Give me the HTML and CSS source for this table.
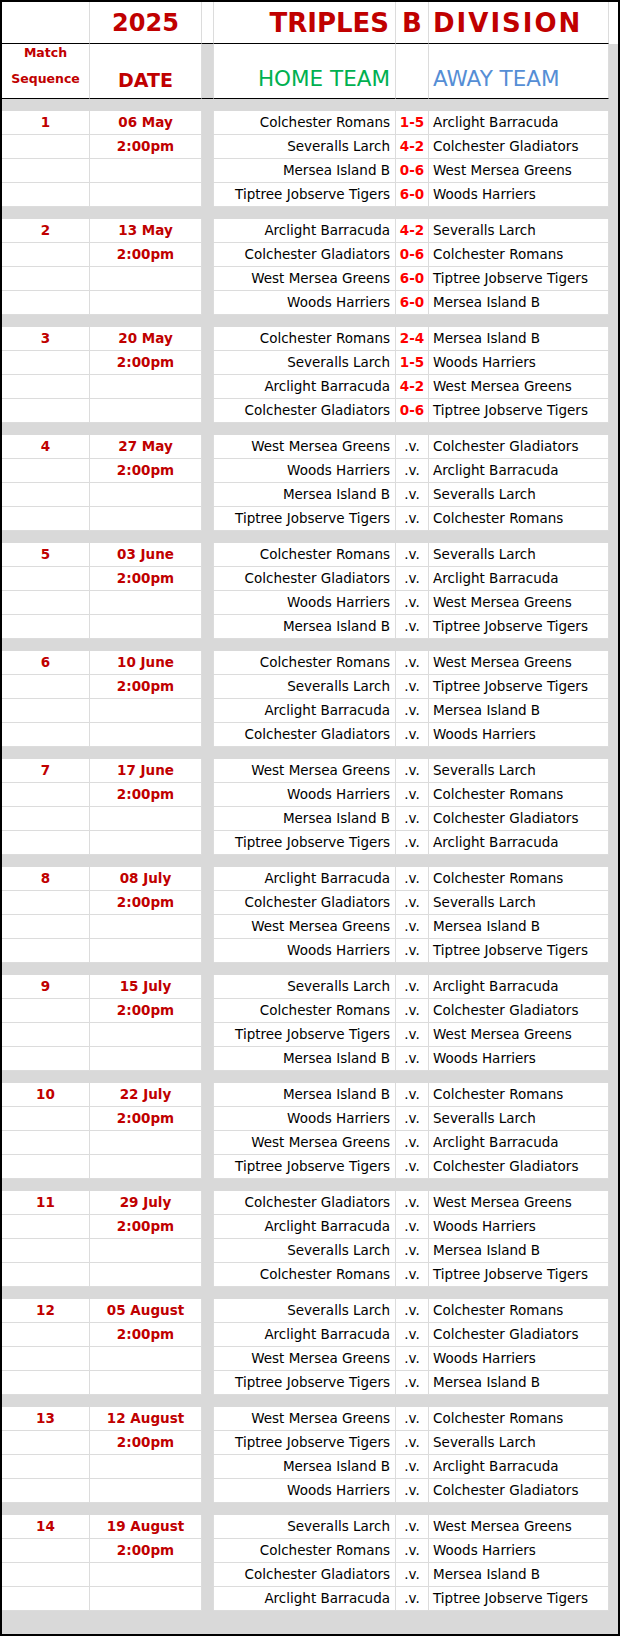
FILE: index.html
```html
<!DOCTYPE html>
<html lang="en">
<head>
<meta charset="utf-8">
<title>2025 Triples B Division</title>
<link rel="stylesheet" href="styles.css">
</head>
<body>
<div class="sheet">
  <div class="row title">
    <div class="cell seq"></div>
    <div class="cell date year">2025</div>
    <div class="cell gap"></div>
    <div class="cell home">TRIPLES</div>
    <div class="cell score">B</div>
    <div class="cell away">DIVISION</div>
    <div class="cell strip"></div>
  </div>
  <div class="row heads">
    <div class="cell seq"><span>Match</span><span>Sequence</span></div>
    <div class="cell date">DATE</div>
    <div class="cell gap"></div>
    <div class="cell home">HOME TEAM</div>
    <div class="cell score"></div>
    <div class="cell away">AWAY TEAM</div>
    <div class="cell strip"></div>
  </div>
  <div id="fixtures"></div>
  <div class="spacer end"></div>
</div>
<script src="script.js"></script>
</body>
</html>
```

FILE: script.js
```js
const weeks = [
  ["1", "06 May", [["Colchester Romans","1-5","Arclight Barracuda"],["Severalls Larch","4-2","Colchester Gladiators"],["Mersea Island B","0-6","West Mersea Greens"],["Tiptree Jobserve Tigers","6-0","Woods Harriers"]]],
  ["2", "13 May", [["Arclight Barracuda","4-2","Severalls Larch"],["Colchester Gladiators","0-6","Colchester Romans"],["West Mersea Greens","6-0","Tiptree Jobserve Tigers"],["Woods Harriers","6-0","Mersea Island B"]]],
  ["3", "20 May", [["Colchester Romans","2-4","Mersea Island B"],["Severalls Larch","1-5","Woods Harriers"],["Arclight Barracuda","4-2","West Mersea Greens"],["Colchester Gladiators","0-6","Tiptree Jobserve Tigers"]]],
  ["4", "27 May", [["West Mersea Greens","","Colchester Gladiators"],["Woods Harriers","","Arclight Barracuda"],["Mersea Island B","","Severalls Larch"],["Tiptree Jobserve Tigers","","Colchester Romans"]]],
  ["5", "03 June", [["Colchester Romans","","Severalls Larch"],["Colchester Gladiators","","Arclight Barracuda"],["Woods Harriers","","West Mersea Greens"],["Mersea Island B","","Tiptree Jobserve Tigers"]]],
  ["6", "10 June", [["Colchester Romans","","West Mersea Greens"],["Severalls Larch","","Tiptree Jobserve Tigers"],["Arclight Barracuda","","Mersea Island B"],["Colchester Gladiators","","Woods Harriers"]]],
  ["7", "17 June", [["West Mersea Greens","","Severalls Larch"],["Woods Harriers","","Colchester Romans"],["Mersea Island B","","Colchester Gladiators"],["Tiptree Jobserve Tigers","","Arclight Barracuda"]]],
  ["8", "08 July", [["Arclight Barracuda","","Colchester Romans"],["Colchester Gladiators","","Severalls Larch"],["West Mersea Greens","","Mersea Island B"],["Woods Harriers","","Tiptree Jobserve Tigers"]]],
  ["9", "15 July", [["Severalls Larch","","Arclight Barracuda"],["Colchester Romans","","Colchester Gladiators"],["Tiptree Jobserve Tigers","","West Mersea Greens"],["Mersea Island B","","Woods Harriers"]]],
  ["10", "22 July", [["Mersea Island B","","Colchester Romans"],["Woods Harriers","","Severalls Larch"],["West Mersea Greens","","Arclight Barracuda"],["Tiptree Jobserve Tigers","","Colchester Gladiators"]]],
  ["11", "29 July", [["Colchester Gladiators","","West Mersea Greens"],["Arclight Barracuda","","Woods Harriers"],["Severalls Larch","","Mersea Island B"],["Colchester Romans","","Tiptree Jobserve Tigers"]]],
  ["12", "05 August", [["Severalls Larch","","Colchester Romans"],["Arclight Barracuda","","Colchester Gladiators"],["West Mersea Greens","","Woods Harriers"],["Tiptree Jobserve Tigers","","Mersea Island B"]]],
  ["13", "12 August", [["West Mersea Greens","","Colchester Romans"],["Tiptree Jobserve Tigers","","Severalls Larch"],["Mersea Island B","","Arclight Barracuda"],["Woods Harriers","","Colchester Gladiators"]]],
  ["14", "19 August", [["Severalls Larch","","West Mersea Greens"],["Colchester Romans","","Woods Harriers"],["Colchester Gladiators","","Mersea Island B"],["Arclight Barracuda","","Tiptree Jobserve Tigers"]]]
];

const host = document.getElementById("fixtures");
let html = "";
weeks.forEach(([num, day, games]) => {
  html += '<div class="spacer"></div>';
  games.forEach((g, i) => {
    const seq = i === 0 ? num : "";
    const date = i === 0 ? day : (i === 1 ? "2:00pm" : "");
    const score = g[1]
      ? '<div class="cell score result">' + g[1] + '</div>'
      : '<div class="cell score vs">.v.</div>';
    html += '<div class="row game">' +
      '<div class="cell seq">' + seq + '</div>' +
      '<div class="cell date">' + date + '</div>' +
      '<div class="cell gap"></div>' +
      '<div class="cell home">' + g[0] + '</div>' +
      score +
      '<div class="cell away">' + g[2] + '</div>' +
      '<div class="cell strip"></div>' +
      '</div>';
  });
});
host.innerHTML = html;
```

FILE: styles.css
```css
html, body {
  margin: 0;
  padding: 0;
  background: #ffffff;
}

body {
  font-family: "Comic Sans MS", "DejaVu Sans", sans-serif;
  color: #000000;
}

.sheet {
  width: 616px;
  border: 2px solid #000000;
  background: #ffffff;
}

.row {
  display: grid;
  grid-template-columns: 88px 112px 12px 182px 33px 180px 9px;
}

.cell {
  box-sizing: border-box;
  border-right: 1px solid #dcdcdc;
  border-bottom: 1px solid #dcdcdc;
  white-space: nowrap;
  overflow: hidden;
}

.cell.strip {
  border: none;
}

.cell.gap {
  background: #d9d9d9;
  border-bottom-color: #d9d9d9;
}

.strip {
  background: #d9d9d9;
}

/* Title row */
.title {
  height: 42px;
}

.title .cell {
  border-bottom: 1px solid #000000;
  display: flex;
  align-items: center;
  color: #c00000;
  font-weight: bold;
  font-size: 26px;
}

.title .cell.gap {
  background: #ffffff;
  border-bottom: 1px solid #000000;
}

.title .cell.strip {
  background: #ffffff;
  border-bottom: none;
}

.title .year {
  justify-content: center;
  font-size: 24px;
}

.title .home {
  justify-content: flex-end;
  padding-right: 6px;
}

.title .score {
  justify-content: center;
}

.title .away {
  padding-left: 4px;
  letter-spacing: 2px;
}

/* Column heading row */
.heads {
  height: 55px;
}

.heads .cell {
  border-bottom: 1px solid #000000;
  display: flex;
  align-items: flex-end;
  padding-bottom: 7px;
  font-size: 21.5px;
}

.heads .cell.strip {
  border-bottom: none;
}

.heads .cell.gap {
  border-bottom: 1px solid #000000;
}

.heads .seq {
  flex-direction: column;
  align-items: center;
  justify-content: flex-end;
  padding-bottom: 6px;
  color: #c00000;
  font-weight: bold;
  font-size: 12.5px;
  line-height: 26px;
}

.heads .date {
  justify-content: center;
  color: #c00000;
  font-weight: bold;
  font-size: 19px;
}

.heads .home {
  justify-content: flex-end;
  padding-right: 5px;
  color: #00b050;
}

.heads .away {
  padding-left: 4px;
  color: #558ed5;
}

/* Spacer bands */
.spacer {
  height: 12px;
  background: #d9d9d9;
}

.spacer.end {
  height: 23px;
}

/* Fixture rows */
.game {
  height: 24px;
  font-size: 13.5px;
  line-height: 23px;
}

.game .seq,
.game .date {
  text-align: center;
  color: #c00000;
  font-weight: bold;
}

.game .home {
  text-align: right;
  padding-right: 5px;
}

.game .away {
  padding-left: 4px;
}

.game .score {
  text-align: center;
}

.game .result {
  color: #ff0000;
  font-weight: bold;
}

.game .vs {
  color: #000000;
}
```
